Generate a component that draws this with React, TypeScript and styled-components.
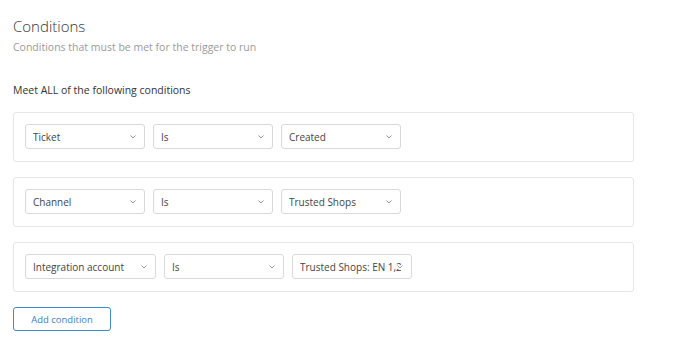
import React from "react";
import styled, { createGlobalStyle } from "styled-components";

const GlobalStyle = createGlobalStyle`
  html, body {
    margin: 0;
    padding: 0;
    background: #ffffff;
  }
  body {
    font-family: "Open Sans", "Noto Sans", sans-serif;
    color: #333;
  }
`;

const Page = styled.div`
  padding: 16px 41px 16px 13px;
  width: 621px;
`;

const Title = styled.h1`
  margin: 0;
  font-size: 15px;
  font-weight: 300;
  color: #333;
  line-height: 20px;
`;

const Subtitle = styled.p`
  margin: 3px 0 0;
  font-size: 10.5px;
  color: #9a9a9a;
  line-height: 16px;
`;

const Lead = styled.p`
  margin: 27px 0 0;
  font-size: 10.5px;
  color: #333;
  line-height: 16px;
`;

const List = styled.div`
  margin-top: 14px;
  display: flex;
  flex-direction: column;
  gap: 15px;
`;

const Card = styled.div`
  border: 1px solid #e6e6e6;
  border-radius: 3px;
  padding: 11px 11px 12px;
  display: flex;
  gap: 8px;
`;

const Select = styled.div<{ $width: number }>`
  position: relative;
  box-sizing: border-box;
  width: ${(p) => p.$width}px;
  height: 25px;
  border: 1px solid #d9d9d9;
  border-radius: 3px;
  padding: 0 10px 0 7px;
  display: flex;
  align-items: center;
  font-size: 10px;
  color: #444;
  white-space: nowrap;
  overflow: hidden;
`;

const Label = styled.span`
  overflow: hidden;
  flex: 1;
`;

const Chevron = styled.svg`
  position: absolute;
  right: 8px;
  top: 50%;
  margin-top: -2px;
  width: 6px;
  height: 4px;
  background: #fff;
`;

const AddButton = styled.button`
  margin-top: 15px;
  width: 98px;
  height: 24px;
  border: 1px solid #3d8bd0;
  border-radius: 3px;
  background: #fff;
  color: #3d80c4;
  font-family: inherit;
  font-size: 9.5px;
  cursor: pointer;
`;

type Row = { label: string; width: number }[];

const rows: Row[] = [
  [
    { label: "Ticket", width: 120 },
    { label: "Is", width: 120 },
    { label: "Created", width: 120 },
  ],
  [
    { label: "Channel", width: 120 },
    { label: "Is", width: 120 },
    { label: "Trusted Shops", width: 120 },
  ],
  [
    { label: "Integration account", width: 131 },
    { label: "Is", width: 120 },
    { label: "Trusted Shops: EN 1,234", width: 120 },
  ],
];

const Dropdown = ({ label, width }: { label: string; width: number }) => (
  <Select $width={width}>
    <Label>{label}</Label>
    <Chevron viewBox="0 0 6 4">
      <path d="M0.5 0.5 L3 3 L5.5 0.5" fill="none" stroke="#8a8a8a" strokeWidth="0.9" />
    </Chevron>
  </Select>
);

export default function App() {
  return (
    <Page>
      <GlobalStyle />
      <Title>Conditions</Title>
      <Subtitle>Conditions that must be met for the trigger to run</Subtitle>
      <Lead>Meet ALL of the following conditions</Lead>
      <List>
        {rows.map((row, i) => (
          <Card key={i}>
            {row.map((s, j) => (
              <Dropdown key={j} label={s.label} width={s.width} />
            ))}
          </Card>
        ))}
      </List>
      <AddButton>Add condition</AddButton>
    </Page>
  );
}
